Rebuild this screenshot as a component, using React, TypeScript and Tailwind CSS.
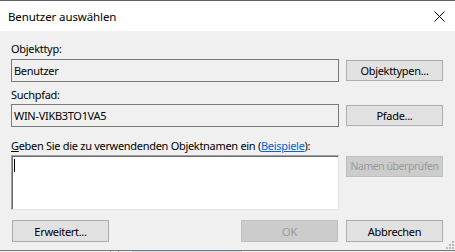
import React from "react";

const btn =
  "w-[97px] h-[21px] flex items-center justify-center whitespace-nowrap border border-[#adadad] bg-[#e1e1e1] text-black";
const btnDis =
  "w-[97px] h-[21px] flex items-center justify-center whitespace-nowrap border border-[#bfbfbf] bg-[#cccccc] text-[#9a9a9a]";

export default function App() {
  return (
    <div className="relative w-[455px] h-[252px] overflow-hidden bg-[#f0f0f0] flex flex-col font-['Noto_Sans',sans-serif] text-[11px] leading-[15px] tracking-[-0.3px] text-black">
      <div className="h-px bg-[#5f5f5f]" />
      <div className="h-[30px] bg-white flex items-center justify-between pl-[8px] pr-[10px]">
        <span className="text-[11.5px] tracking-[-0.1px]">Benutzer auswählen</span>
        <svg width="11" height="11" viewBox="0 0 11 11">
          <path d="M0.5 0.5 L10.5 10.5 M10.5 0.5 L0.5 10.5" stroke="#000" strokeWidth="1" fill="none" />
        </svg>
      </div>
      <div className="flex flex-col pl-[11px] pr-[12px] pt-[10px]">
        <div className="h-[15px]">Objekttyp:</div>
        <div className="mt-[3px] flex items-center gap-[7px]">
          <div className="w-[328px] h-[23px] border border-[#7a7a7a] bg-[#f0f0f0] flex items-center pl-[2px]">
            Benutzer
          </div>
          <div className={btn}>Objekttypen...</div>
        </div>
        <div className="mt-[5px] h-[15px]">Suchpfad:</div>
        <div className="mt-[2px] flex items-center gap-[7px]">
          <div className="w-[328px] h-[23px] border border-[#7a7a7a] bg-[#f0f0f0] flex items-center pl-[2px]">
            WIN-VIKB3TO1VA5
          </div>
          <div className={btn}>Pfade...</div>
        </div>
        <div className="mt-[11px] h-[15px] whitespace-nowrap">
          <span className="underline underline-offset-[1px]">G</span>eben Sie die zu verwendenden Objektnamen ein (
          <span className="text-[#0066cc] underline underline-offset-[1px]">Beispiele</span>):
        </div>
        <div className="mt-[2px] flex items-start gap-[7px]">
          <div className="w-[328px] h-[55px] bg-white border border-t-[#a0a0a0] border-l-[#a0a0a0] border-r-[#e3e3e3] border-b-[#e3e3e3] shadow-[inset_1px_1px_0_#696969] pl-[2px] pt-[3px]">
            <div className="w-px h-[13px] bg-black" />
          </div>
          <div className={`${btnDis} mt-[1px] text-[10.5px] tracking-[-0.45px]`}>Namen überprüfen</div>
        </div>
        <div className="mt-[10px] flex items-center">
          <div className={`${btn} h-[22px] ml-[1px]`}>Erweitert...</div>
          <div className="flex-1" />
          <div className={`${btnDis} h-[22px]`}>OK</div>
          <div className={`${btn} h-[22px] ml-[8px]`}>Abbrechen</div>
        </div>
      </div>
      <div className="flex-1" />
      <div className="h-px bg-[#767676]" />
      <div className="h-px bg-[#f4f4f4] flex">
        <div className="w-[110px]" />
        <div className="w-px bg-[#a0a0a0]" />
        <div className="w-[7px]" />
        <div className="w-px bg-[#a0a0a0]" />
        <div className="w-[13px]" />
        <div className="w-[110px] bg-[#cfdbe8]" />
      </div>
      <div className="absolute right-[1px] bottom-[3px] w-[8px] h-[8px]">
        <div className="absolute left-[6px] top-0 w-[2px] h-[2px] bg-[#b8b8b8]" />
        <div className="absolute left-[3px] top-[3px] w-[2px] h-[2px] bg-[#b8b8b8]" />
        <div className="absolute left-[6px] top-[3px] w-[2px] h-[2px] bg-[#b8b8b8]" />
        <div className="absolute left-0 top-[6px] w-[2px] h-[2px] bg-[#b8b8b8]" />
        <div className="absolute left-[3px] top-[6px] w-[2px] h-[2px] bg-[#b8b8b8]" />
        <div className="absolute left-[6px] top-[6px] w-[2px] h-[2px] bg-[#b8b8b8]" />
      </div>
    </div>
  );
}
